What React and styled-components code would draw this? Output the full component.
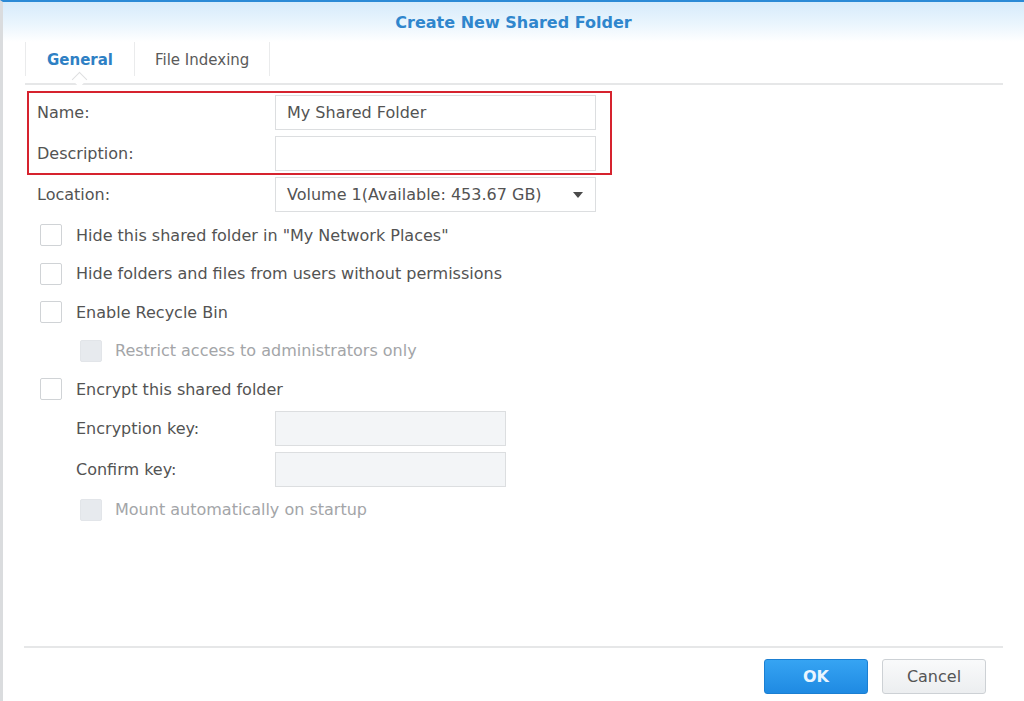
import React from "react";
import styled, { createGlobalStyle, css } from "styled-components";

const Global = createGlobalStyle`
  html, body { margin: 0; padding: 0; background: #ffffff; }
  body { font-family: "DejaVu Sans", "Open Sans", sans-serif; }
  * { box-sizing: border-box; }
`;

const Dialog = styled.div`
  width: 1024px;
  height: 701px;
  display: flex;
  flex-direction: column;
  border-top: 2px solid #2b8ad6;
  border-left: 3px solid #dadcde;
  background: #ffffff;
  overflow: hidden;
`;

const Header = styled.div`
  height: 40px;
  display: flex;
  align-items: center;
  justify-content: center;
  background: linear-gradient(to bottom, #d6ebfb 0%, #eaf5fd 55%, #ffffff 100%);
`;

const Title = styled.div`
  font-size: 16px;
  font-weight: 700;
  color: #2f86cd;
  margin-top: 1px;
`;

const Body = styled.div`
  flex: 1;
  display: flex;
  flex-direction: column;
  padding: 0 21px 0 22px;
`;

const TabBar = styled.div`
  display: flex;
  height: 43px;
  padding-bottom: 7px;
  border-bottom: 2px solid #e6e7e8;
`;

const Tab = styled.div`
  position: relative;
  height: 34px;
  display: flex;
  align-items: center;
  padding: 2px ${(p) => (p.$active ? 21 : 20)}px 0;
  font-size: 15px;
  border-right: 1px solid #eaebec;
  color: #5a5a5a;
  ${(p) =>
    p.$first &&
    css`
      border-left: 1px solid #eaebec;
    `}
  ${(p) =>
    p.$active &&
    css`
      font-weight: 700;
      color: #2e80c4;
      &::after {
        content: "";
        position: absolute;
        left: 50%;
        bottom: -9px;
        width: 10px;
        height: 10px;
        margin-left: -6px;
        background: #ffffff;
        border-left: 1px solid #dedfe0;
        border-top: 1px solid #dedfe0;
        transform: rotate(45deg);
      }
    `}
`;

const Form = styled.div`
  display: flex;
  flex-direction: column;
  padding-left: 12px;
  padding-top: 6px;
`;

const Highlight = styled.div`
  align-self: flex-start;
  display: flex;
  flex-direction: column;
  gap: 6px;
  margin-left: -10px;
  padding: 2px 14px 2px 8px;
  border: 2px solid #d6232e;
`;

const FieldRow = styled.div`
  display: grid;
  grid-template-columns: ${(p) => p.$labelWidth || 238}px ${(p) => p.$inputWidth || 321}px;
  align-items: center;
  margin-top: ${(p) => p.$mt || 0}px;
  margin-left: ${(p) => p.$indent || 0}px;
`;

const Label = styled.div`
  font-size: 16px;
  color: #535353;
`;

const TextBox = styled.div`
  height: 35px;
  display: flex;
  align-items: center;
  padding: 0 11px;
  border: 1px solid #dcdee0;
  background: ${(p) => (p.$disabled ? "#f3f5f7" : "#ffffff")};
  font-size: 16px;
  color: #535353;
  white-space: nowrap;
`;

const SelectBox = styled(TextBox)`
  justify-content: space-between;
  padding-right: 12px;
`;

const Caret = styled.span`
  width: 0;
  height: 0;
  border-left: 5px solid transparent;
  border-right: 5px solid transparent;
  border-top: 6px solid #4a4a4a;
`;

const CheckRow = styled.label`
  height: 38.5px;
  display: flex;
  align-items: center;
  gap: ${(p) => (p.$disabled ? 13 : 14)}px;
  margin-left: ${(p) => p.$indent || 3}px;
  margin-top: ${(p) => p.$mt || 0}px;
  font-size: 16px;
  color: ${(p) => (p.$disabled ? "#a3a5a8" : "#535353")};
`;

const Box = styled.span`
  width: 22px;
  height: 22px;
  flex: none;
  border-radius: 2px;
  ${(p) =>
    p.$disabled
      ? css`
          background: #e7eaee;
          border: 1px solid #e2e5e9;
        `
      : css`
          background: #ffffff;
          border: 1px solid #d0d3d6;
        `}
`;

const Spacer = styled.div`
  flex: 1;
`;

const Footer = styled.div`
  display: flex;
  justify-content: flex-end;
  gap: 14px;
  margin: 0 21px 0 21px;
  padding: 11px 17px 7px 0;
  border-top: 2px solid #e6e7e8;
`;

const Button = styled.button`
  width: 104px;
  height: 35px;
  border-radius: 3px;
  font-family: inherit;
  font-size: 16px;
  cursor: pointer;
  ${(p) =>
    p.$primary
      ? css`
          background: linear-gradient(to bottom, #36a4f3, #1f8ae2);
          border: 1px solid #1b7fd2;
          color: #e9f5ff;
          font-weight: 700;
        `
      : css`
          background: linear-gradient(to bottom, #f9fafb, #eceef0);
          border: 1px solid #cdd1d5;
          color: #555555;
        `}
`;

export default function App() {
  return (
    <>
      <Global />
      <Dialog>
        <Header>
          <Title>Create New Shared Folder</Title>
        </Header>
        <Body>
          <TabBar>
            <Tab $first $active>General</Tab>
            <Tab>File Indexing</Tab>
          </TabBar>
          <Form>
            <Highlight>
              <FieldRow>
                <Label>Name:</Label>
                <TextBox>My Shared Folder</TextBox>
              </FieldRow>
              <FieldRow>
                <Label>Description:</Label>
                <TextBox />
              </FieldRow>
            </Highlight>
            <FieldRow $mt={2}>
              <Label>Location:</Label>
              <SelectBox>
                <span>Volume 1(Available: 453.67 GB)</span>
                <Caret />
              </SelectBox>
            </FieldRow>
            <CheckRow $mt={4}>
              <Box />
              Hide this shared folder in "My Network Places"
            </CheckRow>
            <CheckRow>
              <Box />
              Hide folders and files from users without permissions
            </CheckRow>
            <CheckRow>
              <Box />
              Enable Recycle Bin
            </CheckRow>
            <CheckRow $disabled $indent={43}>
              <Box $disabled />
              Restrict access to administrators only
            </CheckRow>
            <CheckRow>
              <Box />
              Encrypt this shared folder
            </CheckRow>
            <FieldRow $mt={2} $indent={39} $labelWidth={199} $inputWidth={231}>
              <Label>Encryption key:</Label>
              <TextBox $disabled />
            </FieldRow>
            <FieldRow $mt={6} $indent={39} $labelWidth={199} $inputWidth={231}>
              <Label>Confirm key:</Label>
              <TextBox $disabled />
            </FieldRow>
            <CheckRow $disabled $indent={43} $mt={4}>
              <Box $disabled />
              Mount automatically on startup
            </CheckRow>
          </Form>
          <Spacer />
        </Body>
        <Footer>
          <Button $primary>OK</Button>
          <Button>Cancel</Button>
        </Footer>
      </Dialog>
    </>
  );
}
